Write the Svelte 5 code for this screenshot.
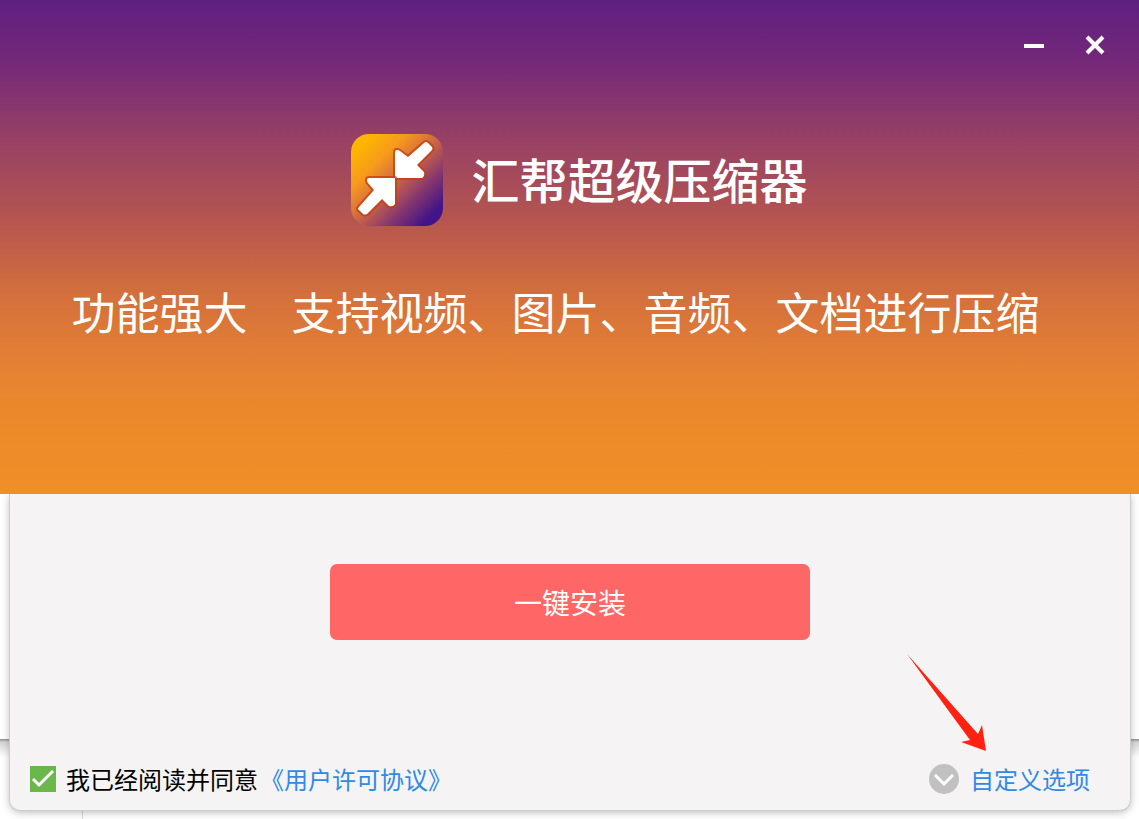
<script lang="ts">
	let agreed = $state(true);
	let expanded = $state(false);
</script>

<div class="desktop">
	<main class="installer">
		<header class="banner">
			<div class="controls">
				<button aria-label="最小化">
					<svg width="20" height="20" viewBox="0 0 20 20">
						<path d="M0 11h20" stroke="#fff" stroke-width="4" />
					</svg>
				</button>
				<button aria-label="关闭">
					<svg width="20" height="20" viewBox="0 0 20 20">
						<path d="M2 2l16 16M18 2L2 18" stroke="#fff" stroke-width="4" />
					</svg>
				</button>
			</div>
			<div class="brand">
				<svg width="92" height="92" viewBox="0 0 92 92" aria-hidden="true">
					<defs>
						<linearGradient id="logo" x1="0" y1="0" x2="1" y2="1">
							<stop offset="0.12" stop-color="#ffb400" />
							<stop offset="0.3" stop-color="#f69a1d" />
							<stop offset="0.5" stop-color="#cc6545" />
							<stop offset="0.68" stop-color="#8b3a6c" />
							<stop offset="0.88" stop-color="#421487" />
						</linearGradient>
					</defs>
					<rect width="92" height="92" rx="18" fill="url(#logo)" />
					<g fill="#fff" stroke="#c43c10" stroke-opacity="0.75" stroke-width="4" stroke-linejoin="round" paint-order="stroke">
						<path d="M44 44V18q0-2 2-2 2 0 3 1l8 6L73 9q2-2 4 0l4 4q1 2 0 3L66 31l7 7q1 4-2 6z" />
						<path d="M44 44H18q-2 0-2 2 0 2 1 3l6 7L8 73q-2 2 0 3l4 4q2 1 4 0l15-15 7 7q4 1 6-2z" />
					</g>
				</svg>
				<h1>汇帮超级压缩器</h1>
			</div>
			<p class="tagline">功能强大　支持视频、图片、音频、文档进行压缩</p>
		</header>

		<section class="panel">
			<button class="install">一键安装</button>
			<footer>
				<label class="agree">
					<input type="checkbox" bind:checked={agreed} />
					<svg width="26" height="26" viewBox="0 0 26 26" aria-hidden="true">
						<rect width="26" height="26" fill="#6ab74c" />
						{#if agreed}
							<path d="M3 13l6 6L23 5" fill="none" stroke="#fff" stroke-width="3" />
						{/if}
					</svg>
					<span>我已经阅读并同意</span>
				</label>
				<a class="license" href="#license">《用户许可协议》</a>
				<button class="custom" aria-expanded={expanded} onclick={() => (expanded = !expanded)}>
					<svg width="30" height="30" viewBox="0 0 30 30" aria-hidden="true">
						<circle cx="15" cy="15" r="15" fill="#c1c1c1" />
						<path d="M6 11l9 9 9-9" fill="none" stroke="#fff" stroke-width="3" />
					</svg>
					<span>自定义选项</span>
				</button>
			</footer>
			<svg class="pointer" width="80" height="98" viewBox="0 0 80 98" aria-hidden="true">
				<path d="M0 0L71 80 75 71 79 97 54 88 63 86z" fill="#ff2212" />
			</svg>
		</section>
	</main>
</div>

<style>
	:global(body) {
		margin: 0;
	}

	.desktop {
		display: flex;
		min-height: 100vh;
		box-sizing: border-box;
		padding-bottom: 9px;
		font-family: 'Noto Sans CJK SC', sans-serif;
		/* edges of the windows lying behind the installer */
		background:
			linear-gradient(#d9d9d9, #d9d9d9) 82px 100% / 1px 9px no-repeat,
			linear-gradient(#8c8c8c, #d5d5d5 3px, #fff 18px) 0 100% / 100% 80px no-repeat,
			#fff;
	}

	.installer {
		display: flex;
		flex-direction: column;
		flex: 1;
	}

	button {
		padding: 0;
		border: none;
		background: none;
		font-family: inherit;
		cursor: pointer;
	}

	svg {
		display: block;
		flex-shrink: 0;
	}

	.banner {
		box-sizing: border-box;
		min-height: 494px;
		padding: 35px 34px 0;
		color: #fff;
		background: linear-gradient(
			#5f1f80 0%,
			#732879 12%,
			#953f66 27%,
			#b6564f 45%,
			#d4703c 60%,
			#e58133 74%,
			#ec8a29 86%,
			#f08f26 100%
		);
	}

	.controls {
		display: flex;
		justify-content: flex-end;
		gap: 41px;
	}

	.brand {
		display: flex;
		justify-content: center;
		align-items: center;
		gap: 28px;
		margin: 79px 0 52px;
		padding-left: 20px;
	}

	h1 {
		margin: 0;
		padding-bottom: 4px;
		font-size: 48px;
		line-height: 88px;
		font-weight: 500;
	}

	.tagline {
		margin: 0;
		padding-right: 28px;
		font-size: 44px;
		line-height: 66px;
		font-weight: 400;
		text-align: center;
		white-space: nowrap;
	}

	.panel {
		position: relative;
		display: flex;
		flex: 1;
		flex-direction: column;
		justify-content: space-between;
		align-items: center;
		margin: 0 9px 0 10px;
		padding: 70px 40px 13px 20px;
		border-radius: 0 0 10px 10px;
		background: #f5f3f4;
		box-shadow:
			0 0 0 1px #cecece,
			0 2px 8px rgba(0, 0, 0, 0.3);
		clip-path: inset(0 -10px -10px -10px);
	}

	.install {
		width: 480px;
		margin-left: 20px;
		border-radius: 7px;
		background: #ff6666;
		color: #fff;
		font-size: 28px;
		line-height: 76px;
		font-weight: 400;
	}

	footer {
		display: flex;
		align-items: center;
		align-self: stretch;
		font-size: 24px;
		line-height: 36px;
	}

	.agree {
		position: relative;
		display: flex;
		align-items: center;
		gap: 10px;
		color: #000;
		cursor: pointer;
	}

	.agree input {
		position: absolute;
		width: 26px;
		height: 26px;
		margin: 0;
		opacity: 0;
	}

	.license {
		margin-left: 2px;
		color: #2f8ae5;
		text-decoration: none;
	}

	.custom {
		display: flex;
		align-items: center;
		gap: 11px;
		margin-left: auto;
		color: #2f8ae5;
		font-size: 24px;
		line-height: 36px;
	}

	.pointer {
		position: absolute;
		right: 143px;
		bottom: 58px;
		pointer-events: none;
	}
</style>
